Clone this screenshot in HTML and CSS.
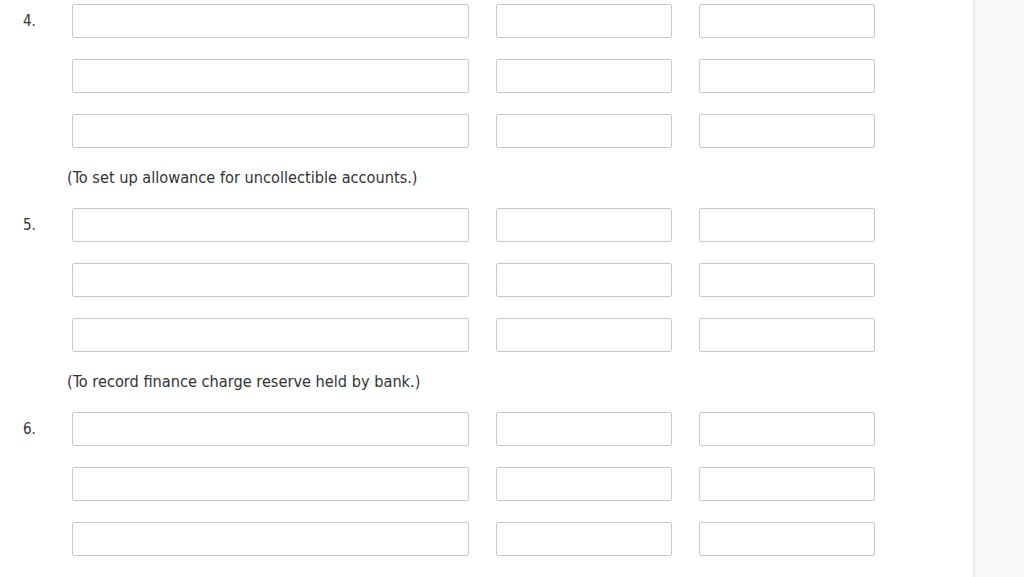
FILE: index.html
```html
<!DOCTYPE html>
<html>
<head>
<meta charset="utf-8">
<link rel="stylesheet" href="styles.css">
</head>
<body>
<div class="page">
  <main class="main">
    <section class="entry">
      <div class="num">4.</div>
      <div class="rows">
        <div class="row"><input class="f acct"><input class="f amt"><input class="f amt"></div>
        <div class="row"><input class="f acct"><input class="f amt"><input class="f amt"></div>
        <div class="row"><input class="f acct"><input class="f amt"><input class="f amt"></div>
        <p class="note">(To set up allowance for uncollectible accounts.)</p>
      </div>
    </section>
    <section class="entry">
      <div class="num">5.</div>
      <div class="rows">
        <div class="row"><input class="f acct"><input class="f amt"><input class="f amt"></div>
        <div class="row"><input class="f acct"><input class="f amt"><input class="f amt"></div>
        <div class="row"><input class="f acct"><input class="f amt"><input class="f amt"></div>
        <p class="note">(To record finance charge reserve held by bank.)</p>
      </div>
    </section>
    <section class="entry">
      <div class="num">6.</div>
      <div class="rows">
        <div class="row"><input class="f acct"><input class="f amt"><input class="f amt"></div>
        <div class="row"><input class="f acct"><input class="f amt"><input class="f amt"></div>
        <div class="row"><input class="f acct"><input class="f amt"><input class="f amt"></div>
      </div>
    </section>
  </main>
  <aside class="side"></aside>
</div>
</body>
</html>
```
FILE: styles.css
```css
html, body {
  margin: 0;
  padding: 0;
  background: #ffffff;
  height: 100%;
  overflow: hidden;
}
body {
  font-family: "DejaVu Sans Condensed", "DejaVu Sans", Verdana, sans-serif;
  font-stretch: condensed;
  color: #333333;
}
.page {
  display: flex;
  height: 577px;
}
.main {
  width: 975px;
  flex: none;
  border-right: 2px solid #ebebeb;
  box-sizing: border-box;
  padding-top: 4px;
  border-top: 1px solid #f3f3f3;
  margin-top: -1px;
}
.side {
  flex: 1;
  background: #f9f9f9;
}
.entry {
  display: flex;
  align-items: flex-start;
}
.num {
  width: 72px;
  box-sizing: border-box;
  padding-left: 23px;
  height: 34px;
  line-height: 34px;
  font-size: 15px;
}
.rows {
  display: flex;
  flex-direction: column;
}
.row {
  display: flex;
  gap: 27px;
  margin-bottom: 21px;
}
.f {
  display: block;
  margin: 0;
  height: 34px;
  box-sizing: border-box;
  border: 1px solid #c9c9c9;
  border-radius: 2px;
  background: #fff;
  padding: 0 6px;
  outline: none;
}
.acct { width: 397px; }
.amt { width: 176px; }
.note {
  margin: -1px 0 0 -5px;
  height: 40px;
  box-sizing: border-box;
  font-size: 16.2px;
  line-height: 20px;
}
```
